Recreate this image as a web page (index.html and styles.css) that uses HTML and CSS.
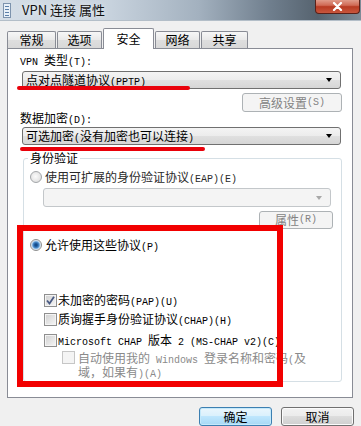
FILE: index.html
```html
<!DOCTYPE html>
<html lang="zh-CN">
  <head>
    <meta charset="UTF-8" />
    <meta name="viewport" content="width=device-width, initial-scale=1.0" />
    <title>VPN 连接 属性</title>
    <link rel="stylesheet" href="styles.css">
  </head>
  <body>
    <div class="window">
      <div class="titlebar">
        <svg class="title-icon" width="8" height="15" viewBox="0 0 8 15">
          <rect x="0.5" y="0.5" width="7" height="14" fill="#e8f0f8" stroke="#7d93ad" />
          <rect x="2" y="3" width="4" height="1" fill="#5b7fa8" />
          <rect x="2" y="6" width="4" height="1" fill="#5b7fa8" />
          <rect x="2" y="9" width="4" height="1" fill="#5b7fa8" />
          <rect x="2" y="12" width="4" height="1" fill="#5b7fa8" />
        </svg>
        <span class="title">VPN 连接 属性</span>
        <div class="close-button">
          <svg width="11" height="9" viewBox="0 0 11 9">
            <path d="M2 1 L9 8 M9 1 L2 8" stroke="#fff" stroke-width="2.2" stroke-linecap="round" />
          </svg>
        </div>
      </div>

      <div class="tabs">
        <div class="tab tab-general">常规</div>
        <div class="tab tab-options">选项</div>
        <div class="tab tab-active">安全</div>
        <div class="tab tab-network">网络</div>
        <div class="tab tab-share">共享</div>
      </div>

      <div class="panel">
        <div class="field-label"><span class="m">VPN </span>类型<span class="m">(T):</span></div>
        <div class="combo">
          <span>点对点隧道协议<span class="m">(PPTP)</span></span>
          <span class="arrow"></span>
        </div>
        <div class="adv-row">
          <button type="button" class="btn btn-disabled btn-advanced">高级设置<span class="m">(S)</span></button>
        </div>

        <div class="field-label label-encrypt">数据加密<span class="m">(D):</span></div>
        <div class="combo combo-encrypt">
          <span>可选加密<span class="m">(</span>没有加密也可以连接<span class="m">)</span></span>
          <span class="arrow"></span>
        </div>

        <fieldset class="group">
          <legend>身份验证</legend>
          <div class="option option-eap">
            <span class="radio"></span>
            <span class="text-dim">使用可扩展的身份验证协议<span class="m">(EAP)(E)</span></span>
          </div>
          <div class="combo combo-disabled">
            <span></span>
            <span class="arrow"></span>
          </div>
          <div class="prop-row">
            <button type="button" class="btn btn-disabled btn-props">属性<span class="m">(R)</span></button>
          </div>
          <div class="option option-allow">
            <span class="radio radio-checked"></span>
            <span>允许使用这些协议<span class="m">(P)</span></span>
          </div>
          <div class="option option-check option-pap">
            <span class="check check-on">
              <svg width="11" height="11" viewBox="0 0 11 11">
                <path d="M2 5.5 L4.5 8.5 L9 1.8" fill="none" stroke="#4a5b84" stroke-width="1.8" />
              </svg>
            </span>
            <span>未加密的密码<span class="m">(PAP)(U)</span></span>
          </div>
          <div class="option option-check option-chap">
            <span class="check"></span>
            <span>质询握手身份验证协议<span class="m">(CHAP)(H)</span></span>
          </div>
          <div class="option option-check option-mschap">
            <span class="check"></span>
            <span><span class="m">Microsoft CHAP </span>版本<span class="m"> 2 (MS-CHAP v2)(C)</span></span>
          </div>
          <div class="option option-auto">
            <span class="check check-disabled"></span>
            <span class="auto-text">自动使用我的<span class="m"> Windows </span>登录名称和密码<span class="m">(</span>及域，如果有<span class="m">)(A)</span></span>
          </div>
        </fieldset>
      </div>

      <div class="dialog-buttons">
        <button type="button" class="btn btn-default">确定</button>
        <button type="button" class="btn">取消</button>
      </div>

      <!-- red annotation marks drawn over the screenshot -->
      <div class="mark-line mark-line-type"></div>
      <div class="mark-line mark-line-encrypt"></div>
      <div class="mark-box"></div>
    </div>
  </body>
</html>
```

FILE: styles.css
```css
* {
  box-sizing: border-box;
}
body {
  margin: 0;
  background: #f0f0f0;
  font-family: "Noto Sans CJK SC", sans-serif;
  font-size: 12px;
  line-height: 14px;
  color: #000;
}
.window {
  position: relative;
  width: 361px;
  height: 426px;
  overflow: hidden;
}
.m {
  font-family: "Liberation Mono", monospace;
  font-size: 10px;
  line-height: 8px;
}

/* title bar */
.titlebar {
  display: flex;
  align-items: center;
  height: 21px;
  background: linear-gradient(90deg, #d5dee7 0%, #c8d3de 30%, #a3b1bf 55%, #6f7e8d 75%, #56636f 88%, #7f8c98 100%);
  border-bottom: 1px solid #b3bec8;
}
.title-icon {
  margin-left: 3px;
  flex: none;
}
.title {
  margin-left: 11px;
  font-size: 13px;
  line-height: 16px;
  color: #111;
  text-shadow: 0 0 5px #eef2f6;
}
.close-button {
  display: flex;
  justify-content: center;
  align-items: center;
  align-self: flex-start;
  margin-left: auto;
  margin-right: 1px;
  margin-top: -1px;
  width: 45px;
  height: 15px;
  border: 1px solid #5a2018;
  border-top: none;
  border-radius: 0 0 4px 4px;
  background: linear-gradient(#e3a494 0%, #d06a55 45%, #b83a22 55%, #c9573e 100%);
}

/* tabs */
.tabs {
  display: flex;
  align-items: flex-end;
  height: 20px;
  margin-top: 7px;
  padding-left: 7px;
}
.tab {
  position: relative;
  height: 17px;
  margin-right: 1px;
  border: 1px solid #898c95;
  border-bottom: none;
  border-radius: 2px 2px 0 0;
  background: linear-gradient(#f7f7f7, #e9e9e9 50%, #dedede 50%, #d8d8d8);
  text-align: center;
  line-height: 16px;
}
.tab-general {
  width: 49px;
}
.tab-options {
  width: 45px;
}
.tab-network {
  width: 45px;
}
.tab-share {
  width: 47px;
}
.tab-active {
  z-index: 1;
  width: 51px;
  height: 21px;
  margin-bottom: -1px;
  background: #fff;
  line-height: 19px;
}

/* tab page */
.panel {
  width: 346px;
  height: 350px;
  margin-left: 7px;
  border: 1px solid #898c95;
  background: #fff;
}
.field-label {
  height: 14px;
  margin-top: 4px;
  padding-left: 12px;
}
.label-encrypt {
  margin-top: -1px;
}
.combo {
  display: flex;
  justify-content: space-between;
  align-items: center;
  width: 319px;
  height: 18px;
  margin: 4px 0 0 14px;
  padding: 0 8px 0 3px;
  border: 1px solid #707070;
  border-radius: 3px;
  background: linear-gradient(#f4f4f4, #ececec 50%, #e0e0e0 50%, #d6d6d6);
}
.combo-encrypt {
  margin-top: 2px;
}
.arrow {
  width: 0;
  height: 0;
  border-left: 3.5px solid transparent;
  border-right: 3.5px solid transparent;
  border-top: 4px solid #000;
}
.combo-disabled {
  width: 288px;
  height: 19px;
  margin: 4px 0 0 19px;
  border-color: #c3c7ca;
  background: #f4f4f4;
}
.combo-disabled .arrow {
  border-top-color: #a8a8a8;
}
.adv-row,
.prop-row {
  display: flex;
  justify-content: flex-end;
  margin-top: 4px;
  padding-right: 10px;
}
.prop-row {
  padding-right: 8px;
}

/* buttons */
.btn {
  display: flex;
  justify-content: center;
  align-items: center;
  width: 73px;
  height: 19px;
  padding: 0;
  border: 1px solid #707070;
  border-radius: 3px;
  background: linear-gradient(#f2f2f2, #ebebeb 50%, #dddddd 50%, #cfcfcf);
  box-shadow: inset 0 0 0 1px #fbfbfb;
  font: inherit;
  color: #000;
}
.btn-advanced {
  width: 100px;
}
.btn-props {
  width: 74px;
  height: 18px;
}
.btn-disabled {
  border-color: #adb2b5;
  background: #f4f4f4;
  box-shadow: none;
  color: #838383;
}
.btn-default {
  border-color: #3c7fb1;
  background: linear-gradient(#eaf6fd, #d9f0fc 50%, #bee6fd 50%, #a7d9f5);
  box-shadow: inset 0 0 0 1px #c4e9fb;
}
.dialog-buttons {
  display: flex;
  justify-content: flex-end;
  gap: 9px;
  margin-top: 9px;
  padding-right: 7px;
}

/* authentication group */
.group {
  min-width: 0;
  margin: 6px 10px 0 15px;
  padding: 0 0 4px;
  border: 1px solid #d5dfe5;
  border-radius: 3px;
}
.group legend {
  height: 14px;
  margin-left: 4px;
  padding: 0 2px;
  line-height: 14px;
}
.option {
  display: flex;
  align-items: center;
  gap: 3px;
  height: 14px;
  padding-left: 6px;
}
.option-eap {
  margin-top: 5px;
}
.option-allow {
  margin-top: 9px;
}
.option-check {
  gap: 1px;
  padding-left: 20px;
}
.option-pap {
  margin-top: 41px;
}
.option-chap {
  margin-top: 5px;
}
.option-mschap {
  margin-top: 7px;
}
.option-auto {
  align-items: flex-start;
  gap: 3px;
  height: 26px;
  margin-top: 4px;
  padding-left: 38px;
  color: #8a8a8a;
  line-height: 13px;
}
.text-dim {
  color: #2a2a2a;
}
.auto-text {
  width: 232px;
}
.radio {
  flex: none;
  width: 12px;
  height: 12px;
  border: 1px solid #a3a6a9;
  border-radius: 50%;
  background: radial-gradient(circle at 45% 45%, #fbfbfb 0, #e6e6e6 60%, #cfcfcf 100%);
}
.radio-checked {
  border-color: #8e8f8f;
  background: radial-gradient(circle at 50% 50%, #0f3f78 0, #1d5a9c 1.5px, #4d8dca 3px, #a8cdee 4px, #f0f0f0 5px, #d8d8d8 6px);
}
.check {
  display: flex;
  justify-content: center;
  align-items: center;
  flex: none;
  width: 13px;
  height: 13px;
  border: 1px solid #8f8f8f;
  background: linear-gradient(135deg, #cfcfcf, #f7f7f7);
  box-shadow: inset 0 0 0 1px #f4f4f4;
}
.check-disabled {
  border-color: #c6c6c6;
  background: #f4f4f4;
  box-shadow: none;
}

/* red annotation marks */
.mark-line {
  position: absolute;
  height: 4px;
  border-radius: 2px;
  background: #e9000a;
}
.mark-line-type {
  left: 17px;
  top: 86px;
  width: 173px;
}
.mark-line-encrypt {
  left: 20px;
  top: 147px;
  width: 185px;
}
.mark-box {
  position: absolute;
  left: 17px;
  top: 225px;
  width: 266px;
  height: 162px;
  border: 6px solid #f20000;
}
```
